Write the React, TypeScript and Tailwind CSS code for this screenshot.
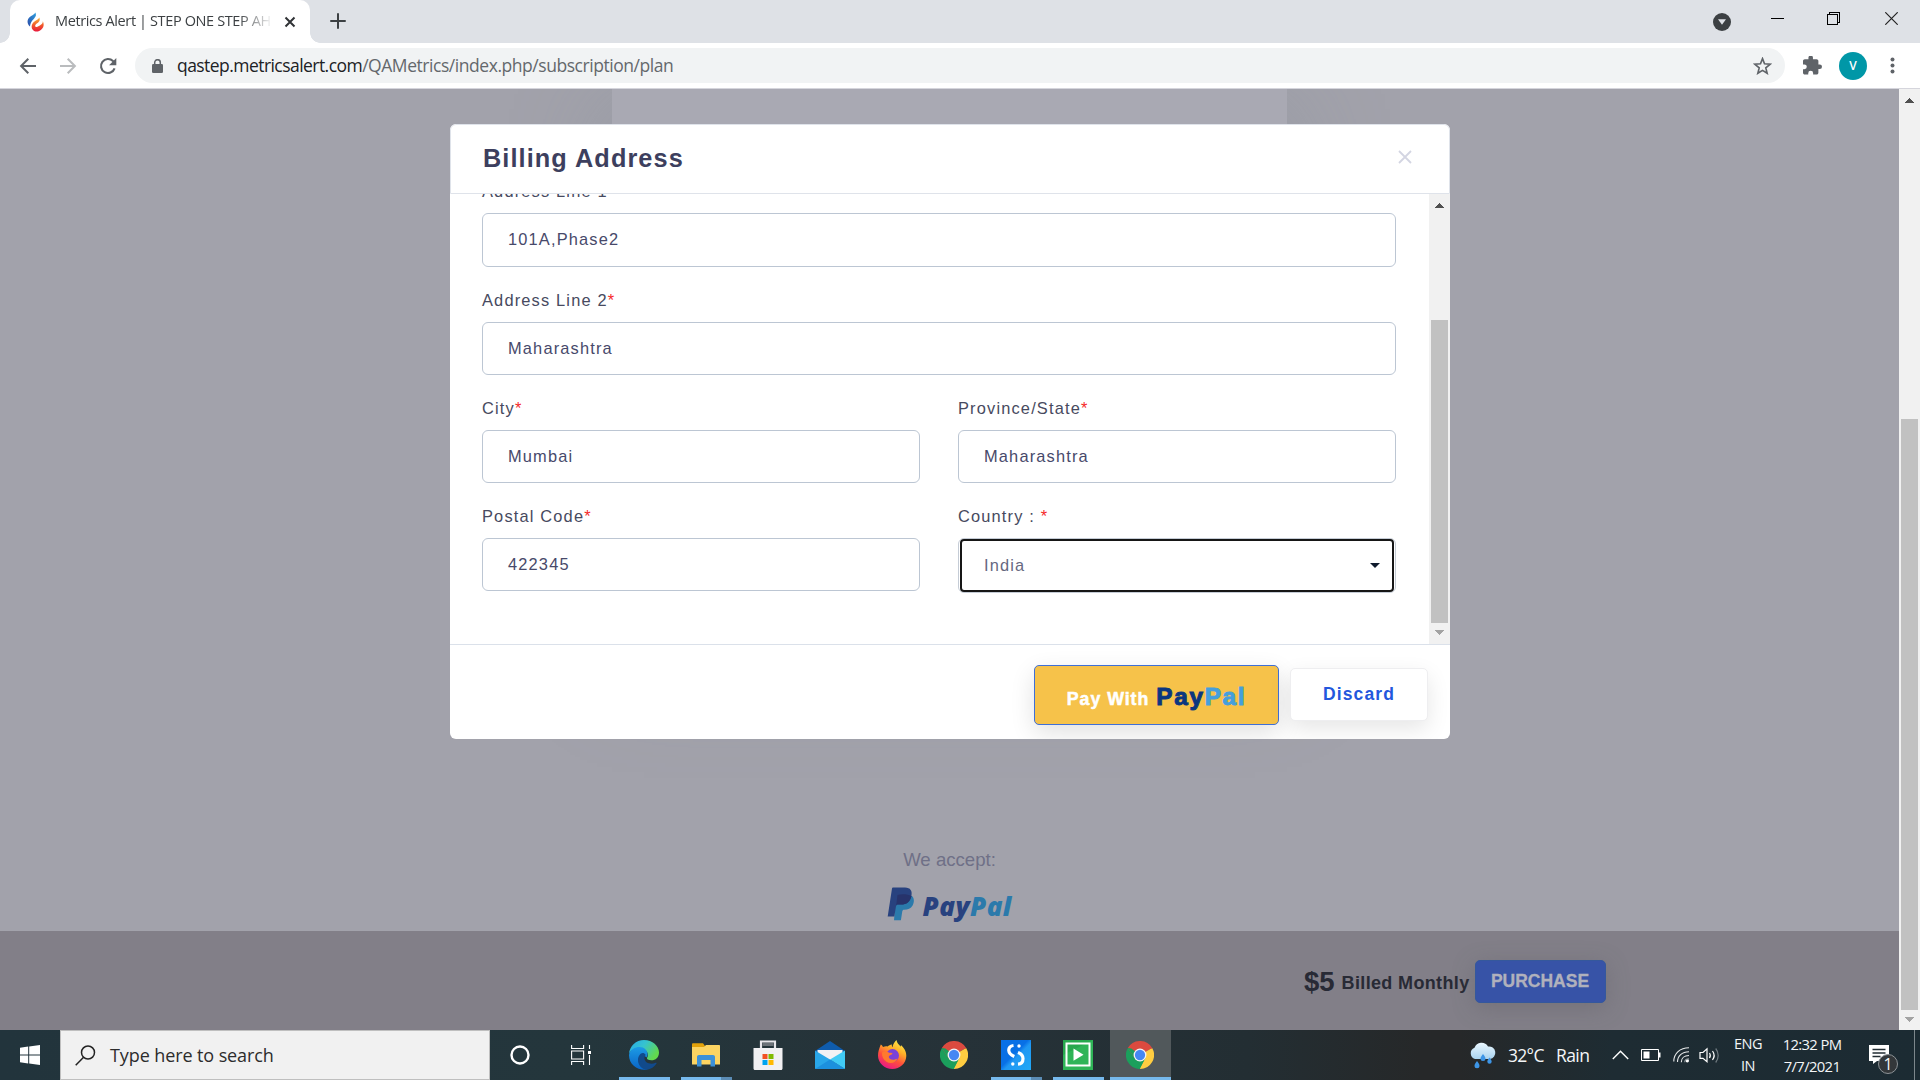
import React from "react";

const UI = "font-['Open_Sans','Noto_Sans',sans-serif]";
const SANS = "font-['Liberation_Sans',Arial,sans-serif]";

function Triangle({ down = false, className = "" }: { down?: boolean; className?: string }) {
  return (
    <svg width="9" height="5" viewBox="0 0 9 5" className={className} shapeRendering="crispEdges">
      <path d={down ? "M0 0h9L4.5 5z" : "M0 5h9L4.5 0z"} fill="currentColor" />
    </svg>
  );
}

function TitleBar() {
  return (
    <div className="flex h-[43px] items-start bg-[#dee1e6] pl-[10px]">
      <div className="relative flex h-[43px] w-[300px] items-center rounded-t-[10px] bg-white pl-[17px]">
        <span className="absolute -left-[10px] bottom-0 h-[10px] w-[10px] bg-[radial-gradient(circle_at_0_0,transparent_9.5px,white_10px)]" />
        <span className="absolute -right-[10px] bottom-0 h-[10px] w-[10px] bg-[radial-gradient(circle_at_100%_0,transparent_9.5px,white_10px)]" />
        <svg width="17" height="20" viewBox="0 0 17 20" className="shrink-0">
          <defs>
            <linearGradient id="fvBlue" x1="1" y1="0" x2="0" y2="1">
              <stop offset="0" stopColor="#2fa0de" />
              <stop offset="1" stopColor="#2b4aa8" />
            </linearGradient>
            <linearGradient id="fvFire" x1="0" y1="0" x2="0" y2="1">
              <stop offset="0" stopColor="#f9b233" />
              <stop offset=".55" stopColor="#f0592b" />
              <stop offset="1" stopColor="#e8193c" />
            </linearGradient>
          </defs>
          <path d="M8.5 0.5C9 3 9.500 3.500 7.500 6 5.500 8.500 3.500 10 3 14.500 0 12 -0.300 8 2.500 5.300 4.600 3.300 7.500 2.500 8.500.5z" fill="url(#fvBlue)" />
          <path d="M12.300 5.500c1.200 3-.3 4.500-2.500 6-1.500 1-2 2.300-1.300 3.200 1.500 1 3-.5 5-1.700 1.700-1 2.500-2 2.300-4 1.500 3.500 1 6-1.200 8.200-2.600 2.700-6.500 3.100-8.600.8-2.200-2.300-1.600-5.500.8-7.900 2.500-2.300 4.700-2.300 5.500-4.600z" fill="url(#fvFire)" />
        </svg>
        <div className={`${UI} ml-[11px] w-[218px] overflow-hidden whitespace-nowrap text-[14.5px] leading-[22px] tracking-[-0.38px] text-[#3c4043] [mask-image:linear-gradient(90deg,#000_84%,transparent)] -mt-[2px]`}>
          Metrics Alert | STEP ONE STEP AH
        </div>
        <svg width="12" height="12" viewBox="0 0 12 12" className="ml-[11px] shrink-0">
          <path d="M1.500 1.500l9 9M10.500 1.500l-9 9" stroke="#303336" strokeWidth="2" />
        </svg>
      </div>
      <svg width="16" height="16" viewBox="0 0 16 16" className="ml-[20px] mt-[13px]">
        <path d="M8 1v14M1 8h14" stroke="#3c4043" strokeWidth="2" strokeLinecap="round" />
      </svg>
      <div className="ml-auto flex items-start pr-[22px]">
        <svg width="18" height="18" viewBox="0 0 18 18" className="mr-[40px] mt-[13px]">
          <circle cx="9" cy="9" r="9" fill="#3c4043" />
          <path d="M5 6.200h8L9 11.800z" fill="#dee1e6" />
        </svg>
        <svg width="13" height="13" viewBox="0 0 13 13" className="mr-[43px] mt-[12px]" shapeRendering="crispEdges">
          <path d="M0 6.500h13" stroke="#000" />
        </svg>
        <svg width="13" height="13" viewBox="0 0 13 13" className="mr-[45px] mt-[12px]" shapeRendering="crispEdges">
          <path d="M.5 2.500h10v10H.5zM2.500 2.500v-2h10v10h-2" stroke="#000" fill="none" />
        </svg>
        <svg width="13" height="13" viewBox="0 0 13 13" className="mt-[12px]">
          <path d="M.3.3l12.400 12.400M12.700.3L.3 12.700" stroke="#222" strokeWidth="1.200" />
        </svg>
      </div>
    </div>
  );
}

function Toolbar() {
  return (
    <div className="flex h-[46px] items-center border-b border-[#d5d5dc] bg-white pl-[19px]">
      <svg width="18" height="18" viewBox="0 0 18 18" fill="none" stroke="#5f6368" strokeWidth="2">
        <path d="M17 9H2.500M9.300 1.800L2.100 9l7.200 7.200" />
      </svg>
      <svg width="18" height="18" viewBox="0 0 18 18" fill="none" stroke="#babcbe" strokeWidth="2" className="ml-[22px]">
        <path d="M1 9h14.500M8.700 1.800L15.900 9l-7.200 7.200" />
      </svg>
      <svg width="18" height="18" viewBox="0 0 18 18" className="ml-[22px]">
        <path d="M15.600 11.400A7 7 0 1 1 14 4.100L16 6" fill="none" stroke="#5f6368" strokeWidth="2.100" />
        <path d="M17.300 1v7.200h-7.200z" fill="#5f6368" />
      </svg>
      <div className="ml-[18px] flex h-[35px] w-[1650px] items-center rounded-full bg-[#f1f3f4] pl-[17px] pr-[13px]">
        <svg width="11" height="14" viewBox="0 0 11 14">
          <rect x="0" y="5" width="11" height="9" rx="1.300" fill="#5f6368" />
          <path d="M2.700 5.500V3.500a2.800 2.800 0 0 1 5.600 0v2" fill="none" stroke="#5f6368" strokeWidth="1.500" />
        </svg>
        <div className={`${UI} ml-[14px] -mt-[2px] whitespace-nowrap text-[17.500px] leading-[24px] text-[#64686c]`}>
          <span className="tracking-[-0.550px] text-[#202124]">qastep.metricsalert.com</span>
          <span className="tracking-[-0.450px]">/QAMetrics/index.php/subscription/plan</span>
        </div>
        <svg width="19" height="18" viewBox="0 0 24 24" className="ml-auto">
          <path d="M12 2.200l2.700 6.900 7.300.6-5.600 4.800 1.800 7.200L12 17.800l-6.200 3.900 1.800-7.200L2 9.700l7.300-.6z" fill="none" stroke="#5f6368" strokeWidth="2.200" />
        </svg>
      </div>
      <svg width="19" height="19" viewBox="2 1.500 21 21" className="ml-[18px]">
        <path d="M20.500 11H19V7c0-1.100-.9-2-2-2h-4V3.500a2.500 2.500 0 0 0-5 0V5H4c-1.100 0-2 .9-2 2v3.800h1.500a2.700 2.700 0 0 1 0 5.400H2V20c0 1.100.9 2 2 2h3.800v-1.500a2.700 2.700 0 0 1 5.400 0V22H17c1.100 0 2-.9 2-2v-4h1.500a2.500 2.500 0 0 0 0-5z" fill="#5f6368" />
      </svg>
      <div className={`${UI} ml-[17px] flex h-[28px] w-[28px] items-center justify-center rounded-full bg-[#0097a7] text-[12px] font-semibold text-white`}>V</div>
      <svg width="5" height="17" viewBox="0 0 5 17" className="ml-[23px]" fill="#5f6368">
        <circle cx="2.500" cy="2.500" r="2" />
        <circle cx="2.500" cy="8.500" r="2" />
        <circle cx="2.500" cy="14.500" r="2" />
      </svg>
    </div>
  );
}

function PaypalMark() {
  return (
    <div className="flex h-[34px] items-start">
      <svg width="28" height="34" viewBox="0 0 28 34">
        <path d="M9 9h16c2.500 2.500 2.300 6.300.6 9.500-1.800 3.200-4.600 4.200-8.600 4.200-1 0-1.500.6-1.700 1.500l-1.400 9H7z" fill="#2b7aab" />
        <path d="M6 .5h12c5.500 0 7.500 3.500 6.400 8.500-1.200 6-5 8.500-10.400 8.500h-3c-1.200 0-1.800.7-2 1.700L7.300 29.500H.7L5 1.500C5.100.9 5.400.5 6 .5z" fill="#28427f" />
        <path d="M10.500 8c4-1.200 10-1 14 1-1.200 6-5 8.500-10.400 8.500h-3c-1.200 0-1.800.7-2 1.700z" fill="#27336b" />
      </svg>
      <div className={`${UI} ml-[8px] mt-[2px] w-[90px] whitespace-nowrap text-[26px] font-extrabold italic leading-[34px] tracking-[0.450px] text-[#28427f]`}>
        Pay<span className="text-[#2b7aab]">Pal</span>
      </div>
    </div>
  );
}

function PageBehind() {
  return (
    <div className={`${SANS} flex h-[941px] w-[1899px] flex-col bg-[#a2a2ab]`}>
      <div className="flex h-[842px] flex-col items-center overflow-hidden">
        <div className="h-[560px] w-[675px] shrink-0 bg-[#a9a9b3] shadow-[0_20px_90px_rgba(130,140,150,0.450)]" />
        <div className="mt-[198px] text-[18.600px] leading-[26px] text-[#6f7087]">We accept:</div>
        <div className="mt-[14px]"><PaypalMark /></div>
      </div>
      <div className="flex h-[99px] items-center bg-[#827f88] pl-[1304px] pt-[2px] text-[#282a35]">
        <span className="text-[27.500px] font-bold leading-[30px]">$5</span>
        <span className="ml-[7px] mt-[4px] text-[18px] font-bold tracking-[0.350px]">Billed Monthly</span>
        <div className="ml-[5px] flex h-[43px] w-[131px] items-center justify-center rounded-[5px] border border-[#35589c] bg-[#3753a7] pb-px text-[17.500px] font-bold text-[#b0b1bc] shadow-[0_5px_22px_rgba(90,88,96,0.350)] [-webkit-text-stroke:0.300px_#b0b1bc]">
          PURCHASE
        </div>
      </div>
    </div>
  );
}

function Field({ label, value, wide = false, first = false }: { label: string; value: string; wide?: boolean; first?: boolean }) {
  return (
    <div className={wide ? "col-span-2" : ""}>
      <div className={first ? "flex h-[24px] items-center text-[#474a60]" : "flex h-[24px] translate-y-px items-center text-[#474a60]"}>
        {label}
        <span className="text-[#f52a2a]">*</span>
      </div>
      <div
        className={
          first
            ? "mt-[10px] flex h-[54px] items-center rounded-[6px] border border-[#bcc6d3] pb-[2px] pl-[25px] text-[#47496a]"
            : "mt-[11px] flex h-[53px] items-center rounded-[6px] border border-[#bcc6d3] pb-px pl-[25px] text-[#47496a]"
        }
      >
        {value}
      </div>
    </div>
  );
}

function BillingModal() {
  return (
    <div className={`${SANS} absolute left-[450px] top-[124px] flex h-[615px] w-[1000px] flex-col overflow-hidden rounded-[6px] bg-white`}>
      <div className="flex h-[70px] shrink-0 items-center justify-between rounded-t-[6px] border border-[#dfe3ea] pl-[32px] pr-[37px]">
        <h2 className="text-[25.300px] font-bold tracking-[1.080px] text-[#3d3f5e]">Billing Address</h2>
        <svg width="14" height="14" viewBox="0 0 14 14" className="mt-[-4px]">
          <path d="M1 1l12 12M13 1L1 13" stroke="#d3d5e2" strokeWidth="1.800" />
        </svg>
      </div>
      <div className="flex h-[450px] shrink-0 overflow-hidden">
        <div className="-mt-[15px] grid h-[460px] w-[979px] shrink-0 grid-cols-[438px_438px] content-start gap-x-[38px] gap-y-[20px] pl-[32px] text-[16.400px] tracking-[1.170px]">
          <Field label="Address Line 1" value="101A,Phase2" wide first />
          <Field label="Address Line 2" value="Maharashtra" wide />
          <Field label="City" value="Mumbai" />
          <Field label="Province/State" value="Maharashtra" />
          <Field label="Postal Code" value="422345" />
          <div>
            <div className="flex h-[24px] translate-y-px items-center whitespace-pre text-[#474a60]">
              Country : <span className="text-[#f52a2a]">*</span>
            </div>
            <div className="mt-[11px] h-[55px] rounded-[6px] border border-[#c5ccd6] px-[1px]">
              <div className="flex h-[53px] items-center justify-between rounded-[4px] border-2 border-[#161616] pl-[22px] pr-[12px] text-[#66687f]">
                India
                <svg width="10" height="5" viewBox="0 0 10 5"><path d="M0 0h10L5 5z" fill="#0f1a2c" /></svg>
              </div>
            </div>
          </div>
        </div>
        <div className="flex w-[21px] flex-col items-center bg-[#f1f1f1]">
          <Triangle className="mt-[9px] text-[#505050]" />
          <div className="mt-[112px] h-[303px] w-[17px] bg-[#c1c1c1]" />
          <Triangle down className="mt-[7px] text-[#a3a3a3]" />
        </div>
      </div>
      <div className="flex grow items-start justify-end border-t border-[#dbe1ea] pr-[22px] pt-[20px]">
        <div className="flex h-[60px] w-[245px] items-baseline justify-center rounded-[5px] border border-[#3f6fd6] bg-[#f6c24a] pt-[17px] text-white shadow-[0_8px_24px_rgba(0,0,0,0.120)]">
          <span className="text-[17.800px] font-bold tracking-[0.950px] [-webkit-text-stroke:0.500px_white]">Pay With</span>
          <span className="ml-[7px] text-[24.300px] font-bold leading-[28px] tracking-[1.700px] text-[#0b367f] [-webkit-text-stroke:1px_#0b367f]">Pay</span>
          <span className="text-[24.300px] font-bold leading-[28px] tracking-[1.700px] text-[#459fdc] [-webkit-text-stroke:1px_#459fdc]">Pal</span>
        </div>
        <div className="ml-[11px] mt-[3px] flex h-[53px] w-[138px] items-center justify-center rounded-[5px] border border-[#eeeef0] bg-white text-[17.500px] font-bold tracking-[1.150px] text-[#2357dd] shadow-[0_8px_22px_rgba(0,0,0,0.100)]">
          Discard
        </div>
      </div>
    </div>
  );
}

function PageScrollbar() {
  return (
    <div className="flex h-[941px] w-[21px] flex-col items-center bg-[#f1f1f1]">
      <Triangle className="mt-[9px] text-[#505050]" />
      <div className="mt-[316px] h-[591px] w-[17px] bg-[#c1c1c1]" />
      <Triangle down className="mt-[7px] text-[#a3a3a3]" />
    </div>
  );
}

function ChromeIcon() {
  return (
    <svg width="28" height="28" viewBox="0 0 48 48">
      <path d="M24 24L3.200 12A24 24 0 0 1 44.800 12z" fill="#db4a3f" />
      <path d="M24 24L44.800 12A24 24 0 0 1 24 48z" fill="#ffcd41" />
      <path d="M24 24L24 48A24 24 0 0 1 3.200 12z" fill="#1b9f5c" />
      <path d="M24 13h21.300L44.800 12H24zM14.500 29.500L3.200 12 24 24z" fill="#db4a3f" />
      <path d="M14.500 29.500L3.200 12l6 1L24 24z" fill="#1b9f5c" />
      <path d="M24 48l9.500-18.500L24 24l-4 23.700z" fill="#1b9f5c" />
      <path d="M24 48l9.500-18.500L35 24l6 12z" fill="#ffcd41" />
      <circle cx="24" cy="24" r="11" fill="#f4f4f4" />
      <circle cx="24" cy="24" r="8.800" fill="#4587f3" />
    </svg>
  );
}

function EdgeIcon() {
  return (
    <svg width="30" height="30" viewBox="0 0 30 30">
      <defs>
        <linearGradient id="edgeTop" x1="0" y1="0" x2="1" y2=".5">
          <stop offset="0" stopColor="#25a9e8" />
          <stop offset=".5" stopColor="#36c3cf" />
          <stop offset="1" stopColor="#62d84d" />
        </linearGradient>
        <linearGradient id="edgeLeft" x1="0" y1="0" x2="0" y2="1">
          <stop offset="0" stopColor="#1c9be6" />
          <stop offset="1" stopColor="#0a63c4" />
        </linearGradient>
      </defs>
      <path d="M0 14C.7 6 7 0 15 0c8.500 0 15 6 15 12.500 0 5-3.500 7.800-7.500 7.800-3.300 0-5-1.200-4.500-2.300 1.300-1.500 1.300-5-1-7.200C12 6.500 3 8 0 14z" fill="url(#edgeTop)" />
      <path d="M0 15C1 9.500 6 7 10.500 7c5 0 8 3.500 8 7 0 1.800-.6 3-1.200 3.600C14 13 9 16 9.500 20.500c.5 5 5.500 9 10.500 8.600C11 32 0 26 0 15z" fill="url(#edgeLeft)" />
      <path d="M12 13.500C7 17 8 28 17.500 29.800c4.500-.4 8-3 10-6.300.4-.7-.2-1-.8-.7-4.700 2.200-10.700.4-11.200-4C15.300 17 16 15.500 16.800 15c-1.300-2.300-3.300-2.500-4.800-1.500z" fill="#114a8b" />
    </svg>
  );
}

function FolderIcon() {
  return (
    <svg width="28" height="24" viewBox="0 0 28 24">
      <path d="M0 1.500C0 .7.500.3 1.200.3H11l2 2.700v4H0z" fill="#e3a20a" />
      <path d="M0 4h12l2-2h13c.6 0 1 .4 1 1v18.500H0z" fill="#fcd462" />
      <path d="M5 23.500V14c0-1.200.8-2 2-2h14c1.200 0 2 .8 2 2v9.500h-4.500V17h-9v6.500z" fill="#3d91d8" />
    </svg>
  );
}

function StoreIcon() {
  return (
    <svg width="30" height="30" viewBox="0 0 30 30">
      <path d="M8 10V1.500h14V10" fill="none" stroke="#e8e6ea" strokeWidth="2.200" />
      <path d="M9.500 2.500h11V6h-11z" fill="#b3b0b6" opacity=".5" />
      <path d="M.5 8h29v20.500c0 .8-.6 1.500-1.500 1.500H2c-.9 0-1.500-.7-1.500-1.500z" fill="#f1f0f2" />
      <path d="M9.500 14h5v5h-5z" fill="#f25022" />
      <path d="M15.500 14h5v5h-5z" fill="#7fba00" />
      <path d="M9.500 20h5v5h-5z" fill="#00a4ef" />
      <path d="M15.500 20h5v5h-5z" fill="#ffb900" />
    </svg>
  );
}

function MailIcon() {
  return (
    <svg width="30" height="28" viewBox="0 0 30 28">
      <path d="M0 10L15 0l15 10v6H0z" fill="#0f5cad" />
      <path d="M2.500 9h25v4L15 20 2.500 12z" fill="#f2f2f4" />
      <path d="M0 9.500L15 18.500 30 28H1c-.6 0-1-.4-1-1z" fill="#29a6e8" />
      <path d="M30 9.500L15 18.500 30 28z" fill="#41cbf5" />
      <path d="M15 18.500L30 28H0z" fill="#1c90dd" />
    </svg>
  );
}

function FirefoxIcon() {
  return (
    <svg width="30" height="30" viewBox="0 0 30 30">
      <defs>
        <linearGradient id="ffBody" x1=".8" y1="0" x2=".3" y2="1">
          <stop offset="0" stopColor="#fff14a" />
          <stop offset=".35" stopColor="#ffae27" />
          <stop offset=".65" stopColor="#ff4f3c" />
          <stop offset="1" stopColor="#e9158a" />
        </linearGradient>
      </defs>
      <path d="M3.800 4.500C4.800 5 5.500 6 6 7c1.500-.7 3-.9 4.500-.6C12 5.500 12.800 4.800 15 4.500c-.3 1-.2 2 .5 2.700C16 4 17.500 2 19.500 0c.3 3 2.500 4.500 4 6.500.5-.2.500-.9.300-1.500C27 7.500 29.500 11.500 29.300 16 29 23.500 23 29 15.300 29 7.500 29 1 23 1 15.500 1 11.500 2.300 8.500 3.800 4.500z" fill="url(#ffBody)" />
      <circle cx="15.500" cy="15.500" r="6.500" fill="#7a41d9" />
      <path d="M5 12.500c3-2 5.500-1.500 7 .3 1.300 0 3-.2 3.500.7-.5 1.500-3.500 1.500-3.800 3.200.3 3.200 5.500 4 8.800 1.500-1.500 4.500-7 6-11 3.500-3-2-4.800-5-4.500-9.200z" fill="#ff7a2e" />
    </svg>
  );
}

function SnagIcon() {
  return (
    <svg width="30" height="30" viewBox="0 0 30 30">
      <defs>
        <linearGradient id="snBg" x1="0" y1="0" x2="1" y2="1">
          <stop offset=".45" stopColor="#0870e6" />
          <stop offset=".55" stopColor="#1f97f3" />
          <stop offset="1" stopColor="#22a9f6" />
        </linearGradient>
      </defs>
      <rect width="30" height="30" fill="url(#snBg)" />
      <path d="M12.500 5.500C8.800 6 7.600 8 7.800 10.600 8 13.800 10 15 13.300 16.500M17 12.500c3.300 1.300 5 3 5 6 0 3.200-1.800 5.500-5 5.700" fill="none" stroke="#fff" strokeWidth="3.200" />
      <circle cx="18" cy="6" r="1.700" fill="#fff" />
      <circle cx="11.800" cy="24" r="1.700" fill="#fff" />
    </svg>
  );
}

function PlayIcon() {
  return (
    <svg width="30" height="30" viewBox="0 0 30 30">
      <rect width="30" height="30" fill="#2fb457" />
      <path d="M0 0h30L0 15z" fill="#27a84d" />
      <rect x="3.500" y="3.500" width="23" height="22" fill="none" stroke="#fff" strokeWidth="2" />
      <path d="M10.500 8.500L20.500 14.800l-10 6z" fill="#fff" />
    </svg>
  );
}

function TaskCell({ children, state = "idle" }: { children: React.ReactNode; state?: "idle" | "running" | "grouped" | "active" }) {
  return (
    <div className={state === "active" ? "relative ml-px flex h-[50px] w-[61px] items-center justify-center bg-[#51585b] pr-[2px]" : "relative flex h-[50px] w-[62px] items-center justify-center"}>
      {children}
      {state === "active" && <span className="absolute inset-x-0 bottom-0 h-[3px] bg-[#76b9ed]" />}
      {state === "running" && <span className="absolute bottom-0 left-[6px] h-[3px] w-[51px] bg-[#76b9ed]" />}
      {state === "grouped" && <span className="absolute bottom-0 left-[6px] h-[3px] w-[51px] border-r-[11px] border-[#5b8cb5] bg-[#76b9ed]" />}
    </div>
  );
}

function Taskbar() {
  return (
    <div className={`${UI} flex h-[50px] items-center bg-[linear-gradient(90deg,#22343c_0%,#24363c_30%,#263238_50%,#232e33_65%,#262829_74%,#262829_76%,#1e2c33_84%,#1c2b33_100%)] text-[#f4f6f7]`}>
      <div className="flex w-[60px] justify-center">
        <svg width="20" height="20" viewBox="0 0 20 20" fill="#fff">
          <path d="M0 2.800L8.200 1.600v7.900H0zM9.200 1.400L20 0v9.500H9.200zM0 10.500h8.200v7.900L0 17.200zM9.200 10.500H20V20L9.200 18.600z" />
        </svg>
      </div>
      <div className="flex h-[50px] w-[430px] items-center border border-[#bfbfbf] bg-[#f1f1f1] pl-[14px]">
        <svg width="21" height="21" viewBox="0 0 21 21" fill="none" stroke="#222" strokeWidth="1.500">
          <circle cx="13" cy="7.500" r="6.500" />
          <path d="M8.600 12.200L.7 20.300" />
        </svg>
        <span className="ml-[14px] text-[18px] leading-[26px] tracking-[-0.100px] text-[#2c2c2c]">Type here to search</span>
      </div>
      <div className="flex w-[60px] justify-center">
        <svg width="20" height="20" viewBox="0 0 20 20"><circle cx="10" cy="10" r="8.500" fill="none" stroke="#fff" strokeWidth="2.400" /></svg>
      </div>
      <div className="flex w-[63px] justify-center pr-px">
        <svg width="21" height="20" viewBox="0 0 21 20" fill="none" stroke="#fff" strokeWidth="1.100">
          <path d="M.6 0v3.500h12V0M.6 20v-3.500h12V20M.6 6h12v8H.6zM18.500 0v4M18.500 10v10" />
          <path d="M17 6h3v3h-3z" fill="#fff" stroke="none" />
        </svg>
      </div>
      <div className="flex">
        <TaskCell state="running"><EdgeIcon /></TaskCell>
        <TaskCell state="grouped"><FolderIcon /></TaskCell>
        <TaskCell><StoreIcon /></TaskCell>
        <TaskCell><MailIcon /></TaskCell>
        <TaskCell><FirefoxIcon /></TaskCell>
        <TaskCell><ChromeIcon /></TaskCell>
        <TaskCell state="grouped"><SnagIcon /></TaskCell>
        <TaskCell state="running"><PlayIcon /></TaskCell>
        <TaskCell state="active"><ChromeIcon /></TaskCell>
      </div>
      <div className="ml-auto flex h-[50px] items-center">
        <svg width="28" height="27" viewBox="0 0 28 27">
          <defs>
            <linearGradient id="cloud" x1="0" y1="0" x2="0" y2="1">
              <stop offset="0" stopColor="#eaf7ff" />
              <stop offset="1" stopColor="#a9d3ef" />
            </linearGradient>
          </defs>
          <path d="M6 17a6 6 0 0 1-.5-11.300A7.500 7.500 0 0 1 19 4.500a6.300 6.300 0 0 1 2 12.500z" fill="url(#cloud)" />
          <path d="M8 19c1.800 2.300 2.500 3.400 2.500 4.700a2.500 2.500 0 0 1-5 0c0-1.300.8-2.400 2.500-4.700zM14 12c1.800 2.300 2.500 3.400 2.500 4.500a2.500 2.500 0 0 1-5 0c0-1.100.8-2.200 2.500-4.500zM20.500 15.500c1.500 2 2.200 3 2.200 4a2.200 2.200 0 0 1-4.400 0c0-1 .7-2 2.200-4z" fill="#3d95e6" />
        </svg>
        <span className="ml-[11px] w-[48px] whitespace-nowrap text-[17.500px] tracking-[-0.700px]">32°C</span>
        <span className="w-[56px] text-[17.500px] tracking-[-0.600px]">Rain</span>
        <svg width="17" height="10" viewBox="0 0 17 10"><path d="M.8 9L8.500 1.200 16.200 9" fill="none" stroke="#fff" strokeWidth="1.400" /></svg>
        <svg width="20" height="12" viewBox="0 0 20 12" className="ml-[12px]">
          <path d="M.5.500h17v11H.5z" fill="none" stroke="#fff" />
          <path d="M2.500 2.500h6v7h-6zM18 3.500h1.500v5H18z" fill="#fff" />
        </svg>
        <svg width="17" height="16" viewBox="0 0 17 16" fill="none" stroke="#e8eaeb" strokeWidth="1.100" className="ml-[12px]">
          <path d="M.8 14.500C.8 6.500 7 .8 16 .8M4.500 15C4.500 9 9 4.700 16 4.700M8.300 15.200c0-4 3-6.700 7.700-6.700" />
          <circle cx="14.300" cy="13.800" r="1.700" fill="#fff" stroke="none" />
          <path d="M11.700 15.200c0-1.800 1.500-3.300 4.300-3.300" stroke="#8e979b" />
        </svg>
        <svg width="21" height="17" viewBox="0 0 21 17" fill="none" stroke="#fff" strokeWidth="1.200" className="ml-[9px]">
          <path d="M1 5.500h3L8 1.800v13L4 11.300H1z" />
          <path d="M10.500 6c1 1.500 1 3.500 0 5M13.500 4c2 2.700 2 6.300 0 9" />
          <path d="M16.700 1.500c3.300 4 3.300 10 0 14" stroke="#6f7a80" />
        </svg>
        <div className="ml-[12px] flex w-[32px] flex-col items-center text-[14.500px] leading-[22.500px] tracking-[-0.500px]">
          <span>ENG</span>
          <span>IN</span>
        </div>
        <div className="ml-[13px] flex w-[70px] flex-col items-center whitespace-nowrap text-[14.800px] leading-[22.500px] tracking-[-0.650px]">
          <span>12:32 PM</span>
          <span>7/7/2021</span>
        </div>
        <div className="relative ml-[22px] h-[20px] w-[20px]">
          <svg width="20" height="19" viewBox="0 0 20 19">
            <path d="M0 0h20v16H8l-4 3v-3H0z" fill="#fff" />
            <path d="M3.500 4.500h13M3.500 8h13M3.500 11.500h8" stroke="#222d33" strokeWidth="1.300" />
          </svg>
          <span className="absolute left-[9px] top-[9px] flex h-[20px] w-[20px] items-center justify-center rounded-full border border-[#8d9397] bg-[#33373a] text-[16px] leading-none">1</span>
        </div>
        <span className="ml-[25px] mr-[5px] h-[50px] w-px bg-[#7d878c]" />
      </div>
    </div>
  );
}

export default function App() {
  return (
    <div className="relative flex h-[1080px] w-[1920px] flex-col overflow-hidden">
      <TitleBar />
      <Toolbar />
      <div className="flex h-[941px]">
        <PageBehind />
        <PageScrollbar />
      </div>
      <Taskbar />
      <BillingModal />
    </div>
  );
}
